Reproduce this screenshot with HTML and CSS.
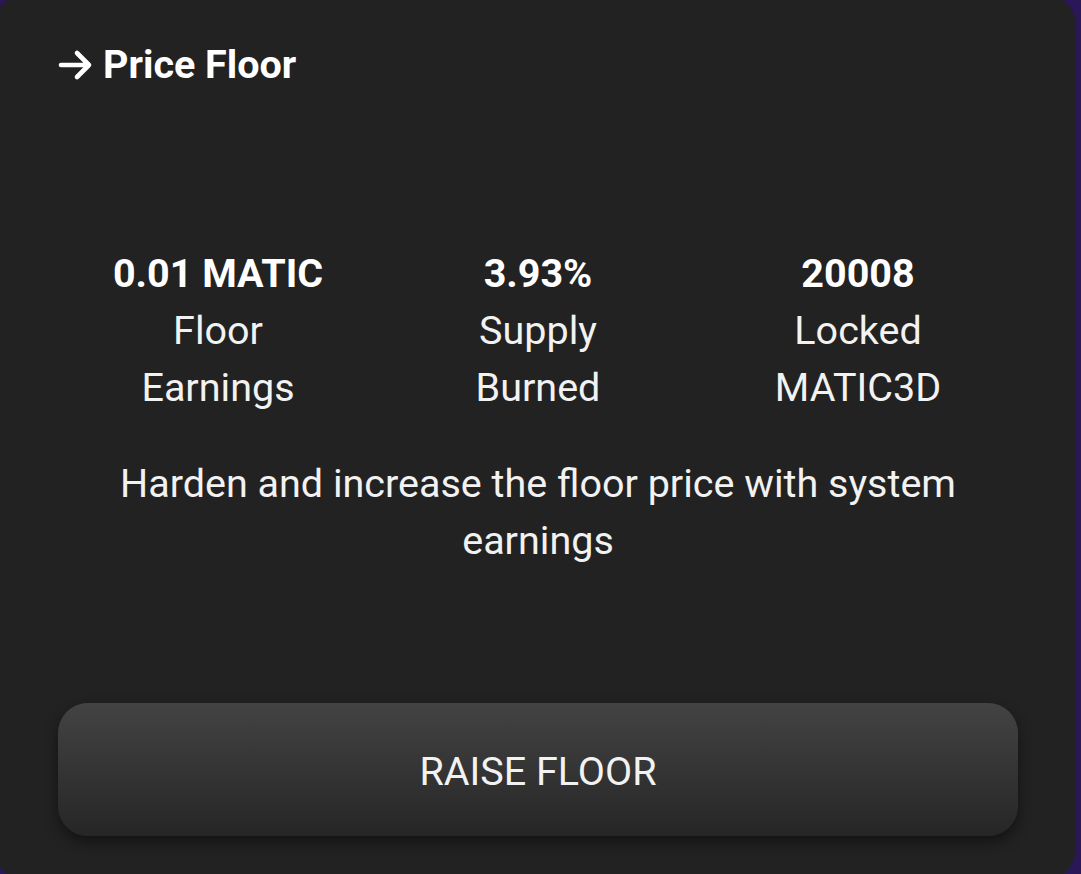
FILE: index.html
```html
<!DOCTYPE html>
<html lang="en">
<head>
  <meta charset="UTF-8" />
  <title>Price Floor</title>
  <link rel="stylesheet" href="styles.css">
</head>
<body>

<div class="card">

  <!-- Header -->
  <div class="title">
    <svg class="arrow" width="36" height="32" viewBox="0 0 36 32">
      <path d="M3 16 H31 M19 4 L31 16 L19 28" fill="none" stroke="#fff" stroke-width="4.6" stroke-linecap="round" stroke-linejoin="round" />
    </svg>
    <span>Price Floor</span>
  </div>

  <!-- Stats -->
  <div class="stats">
    <div class="stat">
      <div class="value">0.01 MATIC</div>
      <div class="label">Floor<br>Earnings</div>
    </div>
    <div class="stat">
      <div class="value">3.93%</div>
      <div class="label">Supply<br>Burned</div>
    </div>
    <div class="stat">
      <div class="value">20008</div>
      <div class="label">Locked<br>MATIC3D</div>
    </div>
  </div>

  <p class="desc">Harden and increase the floor price with system earnings</p>

  <button class="btn">RAISE FLOOR</button>

</div>

</body>
</html>
```

FILE: styles.css
```css
body {
  margin: 0;
  height: 874px;
  overflow: hidden;
  background: #2a1758;
  font-family: Roboto, 'Noto Sans', sans-serif;
  color: #fff;
}
.card {
  margin: -6px 5px 0 -6px;
  height: 886px;
  box-sizing: border-box;
  padding: 46px 58px 0 64px;
  background: #222222;
  border-radius: 32px;
  display: flex;
  flex-direction: column;
}
.title {
  display: flex;
  align-items: center;
  height: 48px;
  font-size: 39.5px;
  font-weight: 700;
  gap: 9px;
}
.arrow {
  display: block;
  margin-top: 2px;
}
.stats {
  display: flex;
  margin-top: 157px;
}
.stat {
  flex: 1;
  text-align: center;
  font-size: 39.5px;
  line-height: 57px;
}
.value {
  font-weight: 700;
}
.label {
  color: #f2f2f2;
}
.desc {
  margin: 39px 0 0;
  text-align: center;
  font-size: 39.5px;
  line-height: 57px;
  padding: 0 40px;
  color: #f2f2f2;
}
.btn {
  margin-top: 134px;
  height: 133px;
  padding-top: 4px;
  border: none;
  border-radius: 30px;
  background: linear-gradient(#434343, #262626);
  box-shadow: 0 6px 14px rgba(0,0,0,0.45);
  color: #f2f2f2;
  font-family: Roboto, 'Noto Sans', sans-serif;
  font-size: 39.5px;
}
```
